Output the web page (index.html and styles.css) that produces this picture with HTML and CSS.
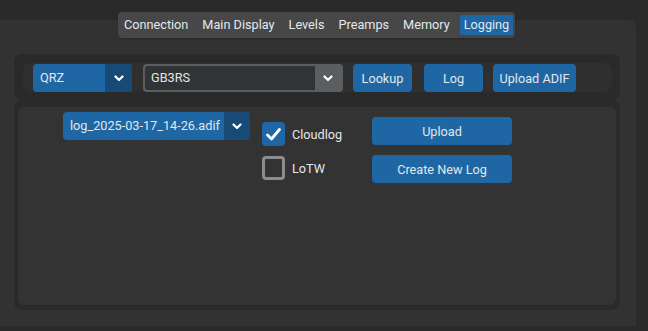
FILE: index.html
```html
<!DOCTYPE html>
<html>
<head>
<meta charset="utf-8">
<link rel="stylesheet" href="styles.css">
</head>
<body>
<div class="page">
  <div class="panel">
    <div class="tabbar">
      <div class="tab">Connection</div>
      <div class="tab">Main Display</div>
      <div class="tab">Levels</div>
      <div class="tab">Preamps</div>
      <div class="tab">Memory</div>
      <div class="tab active">Logging</div>
    </div>

    <div class="group1">
      <div class="row">
        <div class="combo blue qrz">
          <span class="combo-text">QRZ</span>
          <span class="arrow dark"><svg width="10" height="7" viewBox="0 0 10 7"><polyline points="1.5,1.5 5,5 8.5,1.5" fill="none" stroke="#fff" stroke-width="2.2" stroke-linecap="round" stroke-linejoin="round"/></svg></span>
        </div>
        <div class="combo edit">
          <span class="edit-field">GB3RS</span>
          <span class="arrow gray"><svg width="10" height="7" viewBox="0 0 10 7"><polyline points="1.5,1.5 5,5 8.5,1.5" fill="none" stroke="#fff" stroke-width="2.2" stroke-linecap="round" stroke-linejoin="round"/></svg></span>
        </div>
        <button class="btn b-lookup">Lookup</button>
        <button class="btn b-log">Log</button>
        <button class="btn b-adif">Upload ADIF</button>
      </div>
    </div>

    <div class="group2">
      <div class="inner">
        <div class="combo blue file">
          <span class="combo-text">log_2025-03-17_14-26.adif</span>
          <span class="arrow dark"><svg width="10" height="7" viewBox="0 0 10 7"><polyline points="1.5,1.5 5,5 8.5,1.5" fill="none" stroke="#fff" stroke-width="2.2" stroke-linecap="round" stroke-linejoin="round"/></svg></span>
        </div>
        <div class="checks">
          <div class="check-item">
            <span class="box checked"><svg width="17" height="15" viewBox="0 0 17 15"><polyline points="2.5,8 6.5,12 14.5,2.5" fill="none" stroke="#fff" stroke-width="2.8" stroke-linecap="round" stroke-linejoin="round"/></svg></span>
            <span class="check-label">Cloudlog</span>
          </div>
          <div class="check-item">
            <span class="box"></span>
            <span class="check-label">LoTW</span>
          </div>
        </div>
        <div class="actions">
          <button class="btn wide">Upload</button>
          <button class="btn wide">Create New Log</button>
        </div>
      </div>
    </div>
  </div>
</div>
</body>
</html>
```

FILE: styles.css
```css
html, body {
  margin: 0;
  padding: 0;
  background: #2a2a2a;
  width: 648px;
  height: 331px;
  overflow: hidden;
  font-family: Roboto, "Liberation Sans", sans-serif;
  font-size: 12.7px;
  color: #e2e6ea;
}

.page {
  padding-top: 20px;
}

.panel {
  width: 636px;
  height: 306px;
  background: #323232;
  border-top-right-radius: 6px;
  box-sizing: border-box;
  display: flex;
  flex-direction: column;
}

.tabbar {
  margin-top: -8px;
  margin-left: 118px;
  align-self: flex-start;
  display: flex;
  gap: 6px;
  padding: 3px 2px;
  background: #474747;
  border-radius: 4px;
  box-shadow: 0 1px 2px rgba(0,0,0,0.25);
}

.tab {
  height: 20px;
  line-height: 20px;
  padding: 0 4px;
  border-radius: 2px;
  color: #e4e8ec;
}

.tab.active {
  background: #1f67a4;
}

.group1 {
  margin-top: 16px;
  margin-left: 14px;
  width: 606px;
  box-sizing: border-box;
  padding: 9px 8px 8px 9px;
  background: #2a2a2a;
  border-radius: 8px;
}

.row {
  height: 29px;
  box-sizing: border-box;
  padding: 1px 10px 0 10px;
  background: #2f2f2f;
  border-radius: 8px;
  display: flex;
  align-items: flex-start;
}

.combo {
  height: 28px;
  box-sizing: border-box;
  border-radius: 4px;
  display: flex;
  overflow: hidden;
}

.combo.blue {
  background: #1f67a4;
}

.combo-text {
  flex: 1;
  min-width: 0;
  line-height: 28px;
  padding-left: 7px;
  white-space: nowrap;
  overflow: hidden;
}

.arrow {
  width: 27px;
  flex: none;
  display: flex;
  align-items: center;
  justify-content: center;
}

.arrow.dark {
  background: #174a77;
}

.arrow.gray {
  background: #5b5e60;
}

.qrz {
  width: 99px;
}

.edit {
  margin-left: 11px;
  width: 200px;
  border: 2px solid #5b5e60;
  background: #5b5e60;
}

.edit-field {
  flex: 1;
  background: #313335;
  line-height: 24px;
  padding-left: 6px;
  border-radius: 2px 0 0 2px;
}

.edit .arrow {
  width: 26px;
}

.btn {
  height: 28px;
  border: none;
  border-radius: 4px;
  background: #1f67a4;
  color: #e2e6ea;
  font-family: Roboto, "Liberation Sans", sans-serif;
  font-size: 12.7px;
  padding: 0;
  box-sizing: border-box;
}

.b-lookup {
  margin-left: 10px;
  width: 59px;
}

.b-log {
  margin-left: 12px;
  width: 59px;
}

.b-adif {
  margin-left: 10px;
  width: 83px;
}

.group2 {
  margin-left: 14px;
  width: 606px;
  box-sizing: border-box;
  padding: 7px 4px 5px 4px;
  background: #2a2a2a;
  border-radius: 8px;
}

.inner {
  height: 198px;
  background: #333333;
  border-radius: 6px;
  box-sizing: border-box;
  padding: 5px 0 0 45px;
  display: flex;
  align-items: flex-start;
}

.file {
  width: 187px;
}

.file .arrow {
  width: 26px;
}

.checks {
  margin-left: 12px;
  width: 79px;
  flex: none;
  padding-top: 10px;
  display: flex;
  flex-direction: column;
  gap: 10px;
}

.check-item {
  display: flex;
  align-items: center;
  gap: 7px;
  height: 24px;
}

.box {
  width: 23px;
  height: 24px;
  flex: none;
  box-sizing: border-box;
  border: 3px solid #8a8c8e;
  border-radius: 4px;
  display: flex;
  align-items: center;
  justify-content: center;
}

.box.checked {
  border: none;
  background: #1f67a4;
}

.actions {
  margin-left: 31px;
  margin-top: 5px;
  display: flex;
  flex-direction: column;
  gap: 10px;
}

.btn.wide {
  width: 140px;
}
```
